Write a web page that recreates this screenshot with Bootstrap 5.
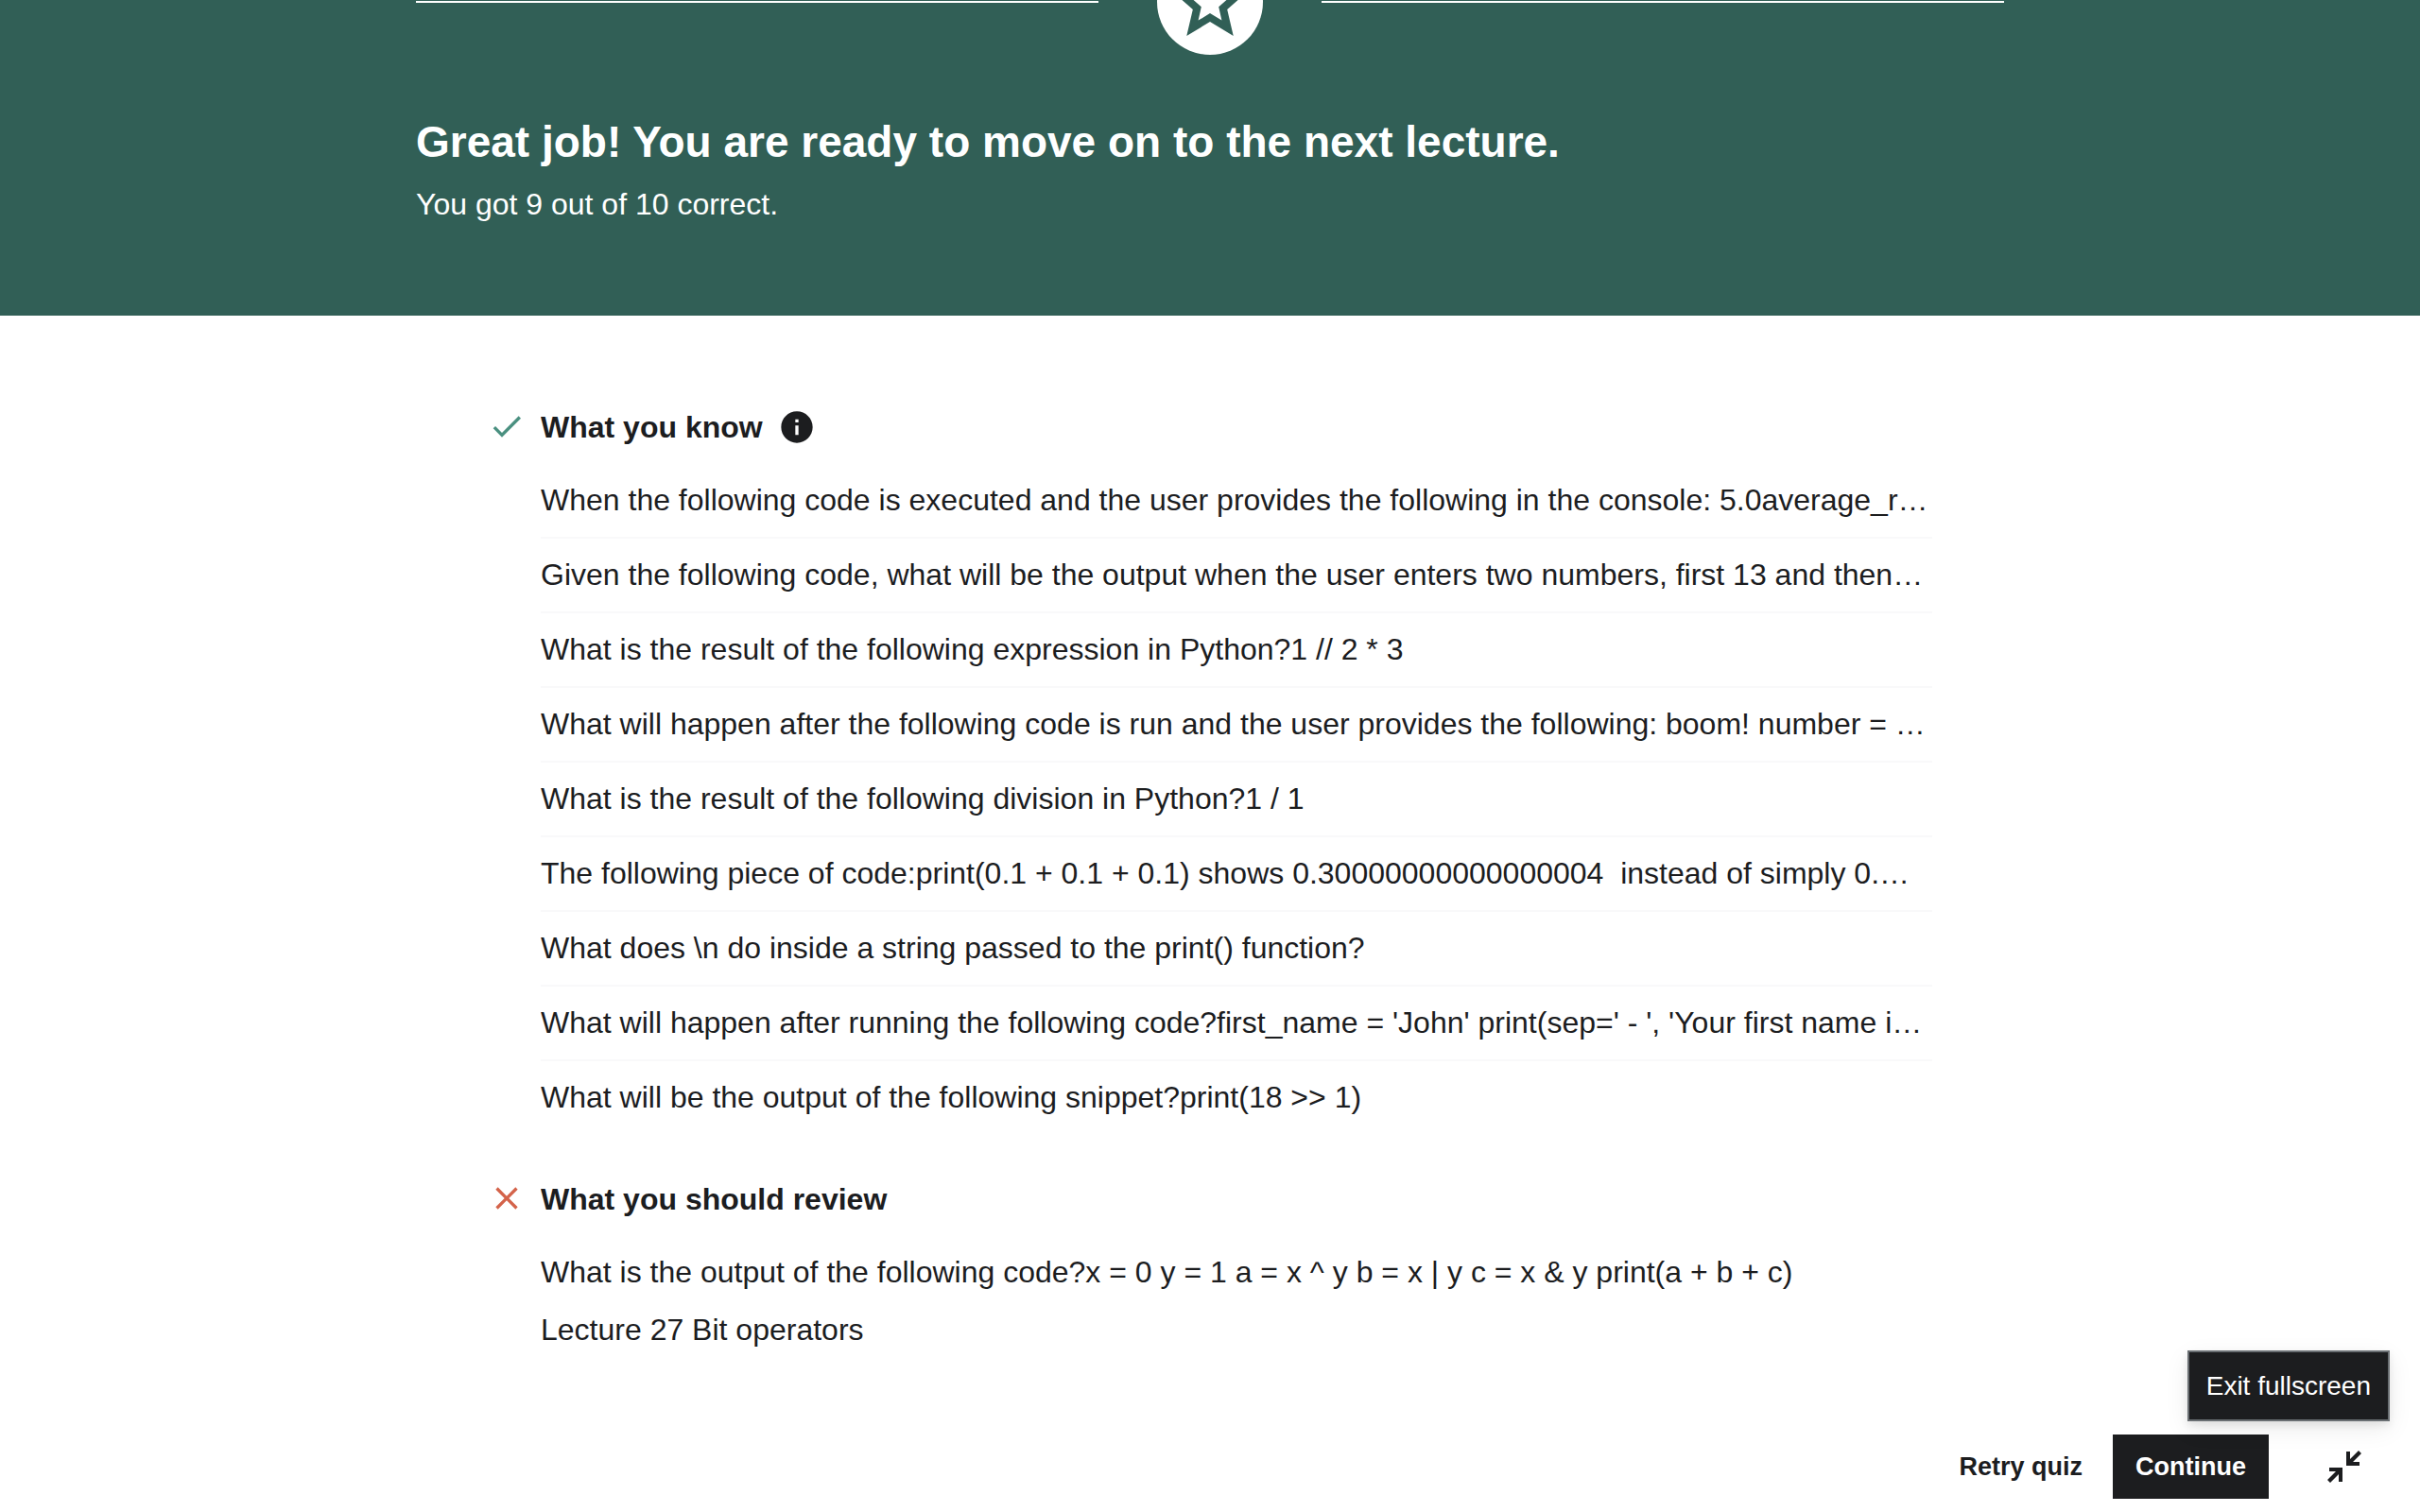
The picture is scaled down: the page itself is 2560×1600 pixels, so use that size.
<!DOCTYPE html>
<html lang="en">
<head>
<meta charset="utf-8">
<meta name="viewport" content="width=device-width, initial-scale=1">
<title>Quiz results</title>
<link href="https://cdn.jsdelivr.net/npm/bootstrap@5.3.0/dist/css/bootstrap.min.css" rel="stylesheet">
<style>
  :root { --ink: #1c1d1f; --header-green: #315f56; }
  body { font-family: "Liberation Sans", Arial, sans-serif; font-size: 32px; line-height: 45px; color: var(--ink); }
  .quiz-width { max-width: 1680px; }
  .result-header { background: var(--header-green); padding-bottom: 95px; }
  /* the badge row is scrolled partly out of view */
  .badge-row { gap: 62px; margin-top: -54px; margin-bottom: 64px; }
  .badge-line { height: 2px; background: #fff; }
  .badge-disc { width: 112px; height: 112px; color: var(--header-green); }
  .result-title { font-size: 46px; line-height: 56px; margin-bottom: 16px; }
  .review-area { padding: 97px 76px 32px; gap: 48px; }
  .review-group { gap: 16px; }
  .review-heading { font-size: 32px; line-height: 42px; margin-bottom: 18px; gap: 16px; }
  .glyph { width: 40px; height: 40px; display: block; fill: currentColor; }
  .glyph-star { width: 96px; height: 96px; fill: currentColor; }
  .info-btn { color: var(--ink); }
  .tone-good { color: #4a9080; }
  .tone-bad { color: #d4634a; }
  .question { padding: 16px 0; white-space: nowrap; overflow: hidden; }
  .question + .question { border-top: 2px solid #f9f9fa; }
  .lecture-link { color: inherit; }
  .action-bar { padding: 14px 32px; gap: 8px; }
  .action-btn { font-size: 27px; line-height: 36px; padding: 16px 24px; border: 0; border-radius: 0; font-weight: 700; color: var(--ink); }
  .action-btn.filled { background: var(--ink); color: #fff; }
  .screen-toggle { margin-left: 24px; }
  .screen-btn { width: 96px; height: 68px; border: 0; background: none; color: var(--ink); }
  .screen-tip { position: absolute; right: 0; bottom: calc(100% + 14px); padding: 16px 18px; border: 2px solid #6a6f73; background: var(--ink); color: #fff; font-size: 28px; line-height: 39px; white-space: nowrap; box-shadow: 0 4px 8px rgba(0,0,0,.08), 0 8px 24px rgba(0,0,0,.08); }
</style>
</head>
<body class="d-flex flex-column min-vh-100 bg-white">
<header class="result-header text-white overflow-hidden">
  <div class="quiz-width mx-auto">
    <div class="badge-row d-flex align-items-center">
      <div class="badge-line flex-fill"></div>
      <div class="badge-disc bg-white rounded-circle d-flex align-items-center justify-content-center">
        <svg class="glyph-star" viewBox="0 0 24 24" aria-hidden="true"><path fill-rule="evenodd" d="M22 9.24l-7.19-.62L12 2 9.19 8.63 2 9.24l5.46 4.73L5.82 21 12 17.27 18.18 21l-1.63-7.03L22 9.24zM12 15l-3.1 1.9.8-3.6-2.75-2.4 3.65-.3L12 7.3l1.4 3.3 3.65.3-2.75 2.4.8 3.6z"/></svg>
      </div>
      <div class="badge-line flex-fill"></div>
    </div>
    <h1 class="result-title fw-bold">Great job! You are ready to move on to the next lecture.</h1>
    <p class="mb-0">You got 9 out of 10 correct.</p>
  </div>
</header>

<main class="quiz-width w-100 mx-auto review-area d-flex flex-column">
  <section class="review-group d-flex align-items-start">
    <svg class="glyph tone-good flex-shrink-0" viewBox="0 0 24 24" aria-hidden="true"><path d="M9 16.17L4.83 12l-1.42 1.41L9 19 21 7l-1.41-1.41z"/></svg>
    <div class="flex-fill overflow-hidden">
      <h2 class="review-heading fw-bold d-flex align-items-center">What you know
        <button type="button" class="btn info-btn p-0 border-0" aria-label="More information"><svg class="glyph" viewBox="0 0 24 24" aria-hidden="true"><path d="M12 2C6.48 2 2 6.48 2 12s4.48 10 10 10 10-4.48 10-10S17.52 2 12 2zm1 15h-2v-6h2v6zm0-8h-2V7h2v2z"/></svg></button>
      </h2>
      <ul class="list-unstyled mb-0">
        <li class="question">When the following code is executed and the user provides the following in the console: 5.0average_r…</li>
        <li class="question">Given the following code, what will be the output when the user enters two numbers, first 13 and then…</li>
        <li class="question">What is the result of the following expression in Python?1 // 2 * 3</li>
        <li class="question">What will happen after the following code is run and the user provides the following: boom! number = …</li>
        <li class="question">What is the result of the following division in Python?1 / 1</li>
        <li class="question">The following piece of code:print(0.1 + 0.1 + 0.1) shows 0.30000000000000004&nbsp; instead of simply 0.…</li>
        <li class="question">What does \n do inside a string passed to the print() function?</li>
        <li class="question">What will happen after running the following code?first_name = 'John' print(sep=' - ', 'Your first name i…</li>
        <li class="question">What will be the output of the following snippet?print(18 &gt;&gt; 1)</li>
      </ul>
    </div>
  </section>

  <section class="review-group d-flex align-items-start">
    <svg class="glyph tone-bad flex-shrink-0" viewBox="0 0 24 24" aria-hidden="true"><path d="M19 6.41L17.59 5 12 10.59 6.41 5 5 6.41 10.59 12 5 17.59 6.41 19 12 13.41 17.59 19 19 17.59 13.41 12z"/></svg>
    <div class="flex-fill overflow-hidden">
      <h2 class="review-heading fw-bold">What you should review</h2>
      <ul class="list-unstyled mb-0">
        <li class="question">What is the output of the following code?x = 0 y = 1 a = x ^ y b = x | y c = x &amp; y print(a + b + c)</li>
      </ul>
      <a href="#lecture-27" class="lecture-link text-decoration-none d-inline-block">Lecture 27 Bit operators</a>
    </div>
  </section>
</main>

<footer class="action-bar mt-auto d-flex justify-content-end align-items-center">
  <button type="button" class="btn action-btn">Retry quiz</button>
  <button type="button" class="btn action-btn filled">Continue</button>
  <div class="screen-toggle position-relative">
    <button type="button" class="screen-btn p-0 d-flex align-items-center justify-content-center" aria-label="Exit fullscreen">
      <svg class="glyph" viewBox="0 0 40 40" aria-hidden="true"><path d="M22 4h4v8L35 3l3 3-9 9h7v4H22zM18 36h-4v-8l-9 9-3-3 9-9H4v-4h14z"/></svg>
    </button>
    <div class="screen-tip" role="tooltip">Exit fullscreen</div>
  </div>
</footer>
<script src="https://cdn.jsdelivr.net/npm/bootstrap@5.3.0/dist/js/bootstrap.bundle.min.js"></script>
</body>
</html>
